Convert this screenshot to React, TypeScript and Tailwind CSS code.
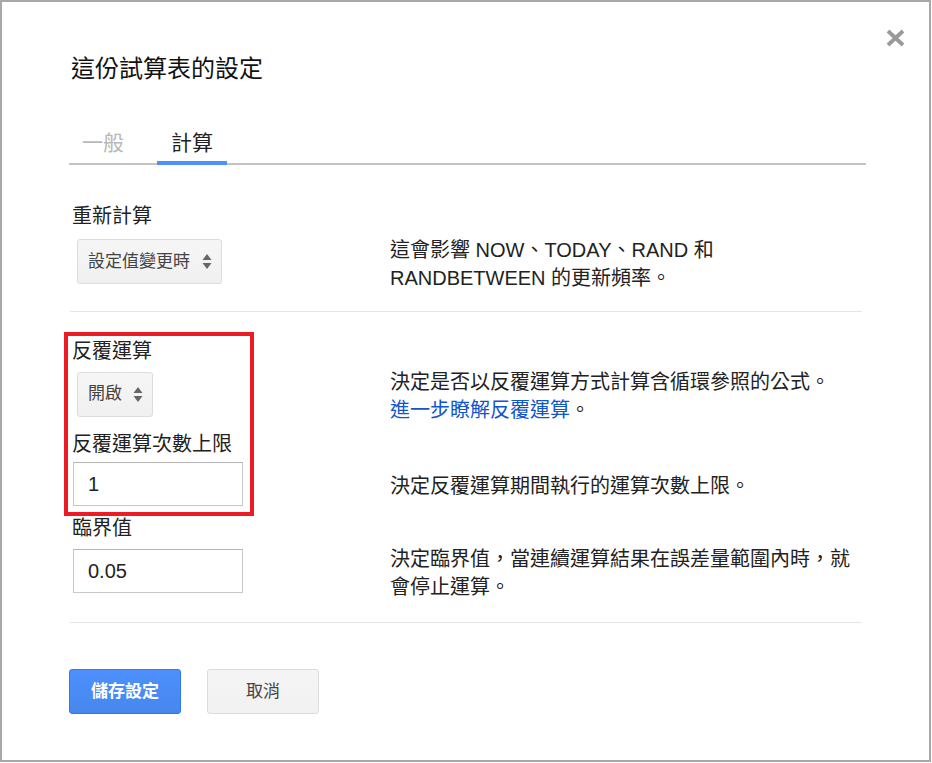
import React from 'react'

const FONT = "font-['Liberation_Sans','Noto_Sans_CJK_TC',sans-serif]"

// Little up/down arrows drawn inside the select boxes
function SelectArrows() {
  return (
    <svg width="10" height="17" viewBox="0 0 10 17" className="flex-shrink-0">
      <path d="M5 1 L9.5 7 L0.5 7 Z" fill="#666" />
      <path d="M5 16 L9.5 10 L0.5 10 Z" fill="#666" />
    </svg>
  )
}

function FakeSelect({ label, width }: { label: string; width: string }) {
  return (
    <div
      className={`${width} h-[45px] flex items-center justify-between pl-[10px] pr-[9px] rounded-[3px] border border-[#dcdcdc] bg-gradient-to-b from-[#f6f6f6] to-[#f0f0f0] text-[17px] text-[#444]`}
    >
      <span>{label}</span>
      <SelectArrows />
    </div>
  )
}

function FakeInput({ value }: { value: string }) {
  return (
    <div className="w-[170px] h-[44px] flex items-center pl-[14px] border border-[#c8c8c8] border-t-[#b4b4b4] bg-white text-[20px] text-[#222]">
      {value}
    </div>
  )
}

function Row({
  control,
  height,
  children,
}: {
  control: React.ReactNode
  height: string
  children: React.ReactNode
}) {
  return (
    <div className={`flex items-center ${height}`}>
      <div className="w-[320px] flex-shrink-0">{control}</div>
      <div className="w-[475px] pt-[4px] text-[20px] leading-[28px] text-[#222]">{children}</div>
    </div>
  )
}

export default function App() {
  return (
    <div className={`${FONT} w-[931px] h-[762px] border-2 border-[#a8a8a8] bg-white relative overflow-hidden`}>
      {/* close button */}
      <button className="absolute left-[882px] top-[25px] w-[22px] h-[22px] flex items-center justify-center">
        <svg width="19" height="18" viewBox="0 0 19 18">
          <path d="M2 2 L17 16 M17 2 L2 16" stroke="#9a9a9a" strokeWidth="3.8" strokeLinecap="butt" />
        </svg>
      </button>

      <div className="ml-[68px] w-[795px] pt-[52px]">
        <h1 className="text-[24px] leading-[30px] text-[#111] font-normal ml-[1px]">這份試算表的設定</h1>

        {/* tabs */}
        <div className="mt-[45px] flex border-b-2 border-[#c4c4c4] ml-[-1px] w-[797px]">
          <div className="px-[13px] pb-[4px] text-[21px] leading-[28px] text-[#b8b8b8]">一般</div>
          <div className="ml-[20px] px-[14px] pb-[4px] mb-[-2px] border-b-4 border-[#4d90fe] text-[21px] leading-[28px] text-[#222]">
            計算
          </div>
        </div>

        {/* recalculation */}
        <div className="pt-[37px] pb-[27px] border-b border-[#e5e5e5] w-[792px]">
          <div className="text-[20px] leading-[28px] text-[#222] ml-[2px]">重新計算</div>
          <div className="mt-[9px]">
            <Row height="h-[45px]" control={<div className="ml-[7px]"><FakeSelect label="設定值變更時" width="w-[145px]" /></div>}>
              這會影響 NOW、TODAY、RAND 和 RANDBETWEEN 的更新頻率。
            </Row>
          </div>
        </div>

        {/* iterative calculation */}
        <div className="pt-[25px] pb-[29px] border-b border-[#e5e5e5] w-[792px]">
          <div className="text-[20px] leading-[28px] text-[#222] ml-[2px]">反覆運算</div>
          <div className="mt-[7px]">
            <Row height="h-[44px]" control={<div className="ml-[7px]"><FakeSelect label="開啟" width="w-[76px]" /></div>}>
              決定是否以反覆運算方式計算含循環參照的公式。
              <br />
              <a className="text-[#1155cc] cursor-pointer">進一步瞭解反覆運算</a>。
            </Row>
          </div>

          <div className="mt-[14px] text-[20px] leading-[28px] text-[#222] ml-[2px]">反覆運算次數上限</div>
          <div className="mt-[4px]">
            <Row height="h-[43px]" control={<div className="ml-[3px]"><FakeInput value="1" /></div>}>
              決定反覆運算期間執行的運算次數上限。
            </Row>
          </div>

          <div className="mt-[9px] text-[20px] leading-[28px] text-[#222] ml-[2px]">臨界值</div>
          <div className="mt-[7px]">
            <Row height="h-[44px]" control={<div className="ml-[3px]"><FakeInput value="0.05" /></div>}>
              決定臨界值，當連續運算結果在誤差量範圍內時，就會停止運算。
            </Row>
          </div>
        </div>

        {/* buttons */}
        <div className="mt-[46px] flex gap-[26px] ml-[-1px]">
          <button className="w-[112px] h-[45px] rounded-[3px] border border-[#3079ed] bg-gradient-to-b from-[#4d90fe] to-[#4787ed] text-white text-[17px] font-bold">
            儲存設定
          </button>
          <button className="w-[112px] h-[45px] rounded-[3px] border border-[#dcdcdc] bg-gradient-to-b from-[#f5f5f5] to-[#f1f1f1] text-[#444] text-[17px]">
            取消
          </button>
        </div>
      </div>

      {/* red highlight annotation */}
      <div className="absolute left-[62px] top-[330px] w-[190px] h-[184px] border-4 border-[#ed1c24] pointer-events-none" />
    </div>
  )
}
